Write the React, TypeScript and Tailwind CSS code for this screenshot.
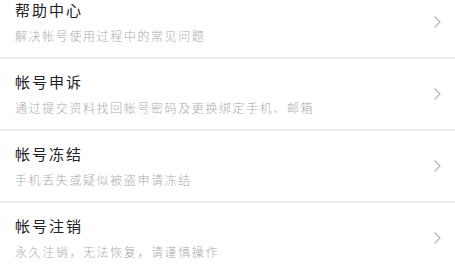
import React from "react";

type Item = {
  title: string;
  desc: string;
};

const items: Item[] = [
  { title: "帮助中心", desc: "解决帐号使用过程中的常见问题" },
  { title: "帐号申诉", desc: "通过提交资料找回帐号密码及更换绑定手机、邮箱" },
  { title: "帐号冻结", desc: "手机丢失或疑似被盗申请冻结" },
  { title: "帐号注销", desc: "永久注销，无法恢复，请谨慎操作" },
];

function Chevron() {
  return (
    <svg width="7" height="12" viewBox="0 0 7 12" fill="none">
      <polyline
        points="1,1 6,6 1,11"
        stroke="#b5b5b5"
        strokeWidth="1.2"
        strokeLinecap="round"
        strokeLinejoin="round"
      />
    </svg>
  );
}

function Row({ item }: { item: Item }) {
  return (
    <div className="flex h-[72px] items-center justify-between border-t-2 border-[#ededed] pl-[15px] pr-[14px]">
      <div className="flex flex-col">
        <span className="text-[15px] leading-[20px] tracking-[2px] text-[#222]">
          {item.title}
        </span>
        <span className="mt-[8px] text-[12px] leading-[16px] tracking-[1.6px] text-[#ababab] font-light">
          {item.desc}
        </span>
      </div>
      <Chevron />
    </div>
  );
}

export default function App() {
  return (
    <div
      className="h-[269px] w-full overflow-hidden bg-white"
      style={{ fontFamily: '"Noto Sans CJK SC", "Noto Sans", sans-serif' }}
    >
      <div className="-mt-[15px]">
        {items.map((item) => (
          <Row key={item.title} item={item} />
        ))}
      </div>
    </div>
  );
}
